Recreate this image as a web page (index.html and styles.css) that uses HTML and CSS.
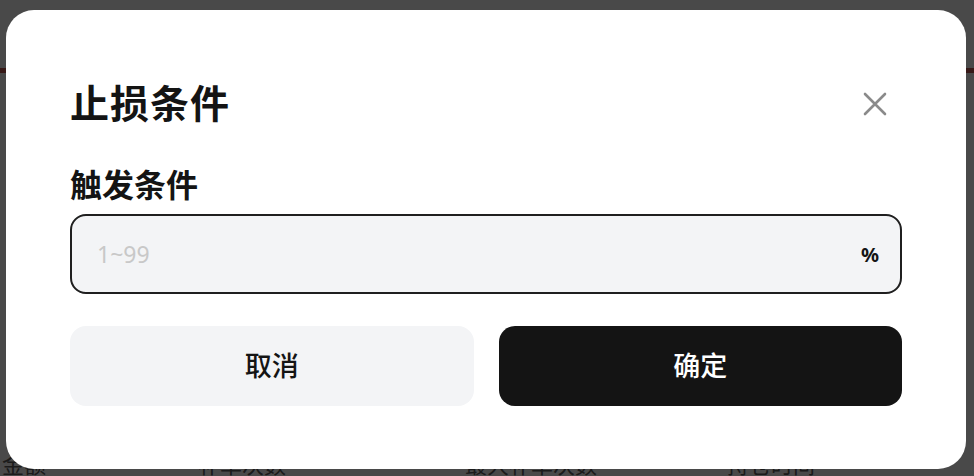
FILE: index.html
```html
<!DOCTYPE html>
<html lang="zh-CN">
<head>
<meta charset="utf-8">
<title>止损条件</title>
<link rel="stylesheet" href="styles.css">
</head>
<body>
<div class="page">
  <div class="page-accent"></div>
  <div class="page-stats">
    <span class="stat stat-first">金额</span>
    <span class="stat">补单次数</span>
    <span class="stat">最大补单次数</span>
    <span class="stat">持仓时间</span>
  </div>
</div>
<div class="overlay">
  <div class="modal">
    <div class="modal-header">
      <h1 class="modal-title">止损条件</h1>
      <button class="close-btn" aria-label="关闭">
        <svg width="24" height="24" viewBox="0 0 24 24"><path d="M2 2 L22 22 M22 2 L2 22" stroke="#8a8a8a" stroke-width="2.6" stroke-linecap="round" fill="none"/></svg>
      </button>
    </div>
    <div class="field-label">触发条件</div>
    <div class="input-box">
      <span class="placeholder">1~99</span>
      <span class="unit">%</span>
    </div>
    <div class="actions">
      <button class="btn btn-cancel">取消</button>
      <button class="btn btn-confirm">确定</button>
    </div>
  </div>
</div>
</body>
</html>
```
FILE: styles.css
```css
* { box-sizing: border-box; }
html, body { margin: 0; padding: 0; }
body {
  width: 974px;
  height: 476px;
  overflow: hidden;
  background: #f6f6f6;
  font-family: "Noto Sans CJK SC", "Noto Sans", sans-serif;
}
.page {
  height: 476px;
  display: flex;
  flex-direction: column;
}
.page-accent {
  margin-top: 68px;
  height: 5px;
  background: #b8554e;
}
.page-stats {
  margin-top: auto;
  display: flex;
  font-size: 22px;
  color: #5a5a5a;
  line-height: 26px;
  padding-left: 2px;
}
.stat-first { width: 196px; }
.stat:nth-child(2) { width: 267px; }
.stat:nth-child(3) { width: 262px; }

.overlay {
  position: fixed;
  inset: 0;
  background: rgba(0, 0, 0, 0.7);
  padding: 10px 8px 7px 6px;
}
.modal {
  width: 960px;
  height: 459px;
  background: #ffffff;
  border-radius: 28px;
  padding: 64px 64px 63px 64px;
  display: flex;
  flex-direction: column;
}
.modal-header {
  height: 56px;
  display: flex;
  align-items: center;
  justify-content: space-between;
}
.modal-title {
  margin: 0;
  font-size: 39px;
  font-weight: 700;
  color: #141414;
  line-height: 48px;
  letter-spacing: 1px;
  position: relative;
  top: -1px;
}
.close-btn {
  border: 0;
  background: none;
  padding: 0;
  width: 24px;
  height: 24px;
  margin-right: 15px;
  margin-top: 4px;
  display: flex;
}
.field-label {
  margin-top: 33px;
  height: 40px;
  line-height: 40px;
  font-size: 32px;
  font-weight: 700;
  color: #141414;
}
.input-box {
  margin-top: 11px;
  height: 80px;
  border: 2px solid #1f1f1f;
  border-radius: 16px;
  background: #f3f4f6;
  display: flex;
  align-items: center;
  justify-content: space-between;
  padding: 0 21px 0 25px;
}
.placeholder {
  font-family: "Noto Sans", sans-serif;
  font-size: 23px;
  color: #c8c8c8;
}
.unit {
  font-family: "Noto Sans", sans-serif;
  font-size: 20px;
  font-weight: 700;
  color: #141414;
}
.actions {
  margin-top: 32px;
  display: flex;
  gap: 25px;
}
.btn {
  flex: 1;
  height: 80px;
  border: 0;
  border-radius: 16px;
  padding: 0 0 4px 0;
  font-family: "Noto Sans CJK SC", "Noto Sans", sans-serif;
  font-size: 27px;
  font-weight: 500;
}
.btn-cancel {
  background: #f3f4f6;
  color: #141414;
}
.btn-confirm {
  background: #141414;
  color: #ffffff;
}
```
